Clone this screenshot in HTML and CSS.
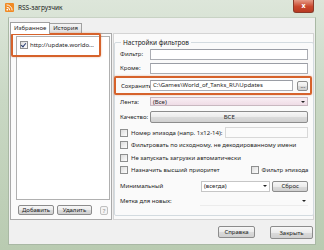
FILE: index.html
```html
<!DOCTYPE html>
<html lang="ru">
<head>
<meta charset="UTF-8">
<title>RSS-загрузчик</title>
<link rel="stylesheet" href="styles.css">
</head>
<body>
<div class="window">
  <div class="titlebar">
    <span class="app-icon">
      <svg width="9" height="9" viewBox="0 0 9 9">
        <rect x="0" y="0" width="9" height="9" rx="1" fill="#f08a24"/>
        <circle cx="2.3" cy="6.7" r="0.9" fill="#fff"/>
        <path d="M1.6 4.2a3.2 3.2 0 0 1 3.2 3.2M1.6 1.9a5.5 5.5 0 0 1 5.5 5.5" stroke="#fff" stroke-width="0.9" fill="none"/>
      </svg>
    </span>
    <span class="title">RSS-загрузчик</span>
    <span class="close">x</span>
  </div>

  <div class="client">
    <div class="body">
      <div class="favorites">
        <div class="tabs">
          <span class="tab active">Избранное</span>
          <span class="tab">История</span>
        </div>
        <div class="tab-page">
          <div class="feed-list">
            <div class="feed"><span class="check checked"></span>http://update.worldo...</div>
          </div>
          <div class="list-buttons">
            <button class="btn add">Добавить</button>
            <button class="btn remove">Удалить</button>
            <button class="btn help">?</button>
          </div>
        </div>
        <div class="mark"></div>
      </div>

      <div class="settings">
        <fieldset class="filters">
          <legend>Настройки фильтров</legend>
          <div class="row">
            <label>Фильтр:</label>
            <span class="input"></span>
          </div>
          <div class="row">
            <label>Кроме:</label>
            <span class="input"></span>
          </div>
          <div class="row save">
            <label>Сохранить</label>
            <span class="input">C:\Games\World_of_Tanks_RU\Updates</span>
            <button class="btn browse">...</button>
          </div>
          <div class="row feed-row">
            <label>Лента:</label>
            <span class="select pink">(Все)</span>
          </div>
          <div class="row quality">
            <label>Качество:</label>
            <button class="btn wide">ВСЕ</button>
          </div>
          <div class="opt episode">
            <span class="check"></span>Номер эпизода (напр. 1x12-14):
            <span class="input ep-input"></span>
          </div>
          <div class="opt"><span class="check"></span>Фильтровать по исходному, не декодированному имени</div>
          <div class="opt"><span class="check"></span>Не запускать загрузки автоматически</div>
          <div class="opt">
            <span class="check"></span>Назначить высший приоритет
            <span class="ep-filter"><span class="check"></span>Фильтр эпизода</span>
          </div>
          <div class="row minimal">
            <label>Минимальный</label>
            <span class="select short">(всегда)</span>
            <button class="btn reset">Сброс</button>
          </div>
          <div class="row label-row">
            <label>Метка для новых:</label>
            <span class="select flat"></span>
          </div>
        </fieldset>
      </div>
    </div>

    <div class="footer">
      <button class="btn help-btn">Справка</button>
      <button class="btn close-btn">Закрыть</button>
    </div>
  </div>
</div>
</body>
</html>
```

FILE: styles.css
```css
html, body {
  margin: 0;
  padding: 0;
}

body {
  font-family: 'Noto Sans', 'DejaVu Sans', sans-serif;
  font-size: 6px;
  color: #1e1e1e;
}

.window {
  width: 324px;
  height: 250px;
  background: linear-gradient(180deg, #dde6da 0%, #c9d8c4 40%, #b9cbb1 100%);
  display: flex;
  flex-direction: column;
}

.titlebar {
  height: 17px;
  display: flex;
  align-items: center;
  padding-left: 5px;
}

.app-icon {
  display: flex;
  margin-top: -2px;
}

.title {
  margin-left: 4px;
  margin-top: -3px;
  font-size: 6.5px;
  color: #222;
}

.close {
  margin-left: auto;
  margin-right: 10px;
  align-self: flex-start;
  width: 19px;
  height: 12px;
  background: linear-gradient(180deg, #e59a86 0%, #c9472d 55%, #b83a22 100%);
  border: 1px solid #8a3a2a;
  border-top: none;
  border-radius: 0 0 3px 3px;
  color: #fff;
  font-size: 7px;
  font-weight: bold;
  text-align: center;
  line-height: 11px;
}

.client {
  flex: 1;
  margin: 0 8px 5px 8px;
  background: #f0f0f0;
  border: 1px solid #a9b8a4;
  border-top-color: #c8d2c4;
  display: flex;
  flex-direction: column;
}

.body {
  display: flex;
  padding: 4px 1px 0 1px;
}

/* left: favourites list */
.favorites {
  position: relative;
  width: 102px;
}

.tabs {
  display: flex;
  height: 11px;
  align-items: flex-end;
}

.tab {
  height: 9px;
  line-height: 9px;
  padding: 0 3px;
  border: 1px solid #a0a0a0;
  border-bottom: none;
  background: linear-gradient(180deg, #f4f4f4, #dedede);
  margin-left: -1px;
}

.tab.active {
  height: 11px;
  line-height: 11px;
  background: #fff;
  margin-left: 0;
  position: relative;
  z-index: 1;
  margin-bottom: -1px;
}

.tab-page {
  height: 187px;
  background: #fbfbfb;
  border: 1px solid #a9a9a9;
  padding: 2px 1px 0 5px;
  box-sizing: border-box;
}

.feed-list {
  height: 164px;
  background: #fff;
  border: 1px solid #b0b0b0;
  padding: 4px 3px;
  box-sizing: border-box;
}

.feed {
  display: flex;
  align-items: center;
  gap: 2px;
  white-space: nowrap;
}

.check {
  display: inline-block;
  width: 6px;
  height: 6px;
  border: 1px solid #8e8f8f;
  background: linear-gradient(135deg, #dcdcdc, #fdfdfd);
  flex-shrink: 0;
  position: relative;
}

.check.checked::after {
  content: '';
  position: absolute;
  left: 1px;
  top: 0;
  width: 2px;
  height: 4px;
  border: solid #2a3f73;
  border-width: 0 1px 1px 0;
  transform: rotate(40deg);
}

.list-buttons {
  display: flex;
  margin-top: 5px;
  padding-left: 2px;
  align-items: center;
}

.btn {
  font-family: inherit;
  font-size: 6px;
  color: #1e1e1e;
  background: linear-gradient(180deg, #f7f7f7 0%, #ebebeb 50%, #dbdbdb 51%, #d0d0d0 100%);
  border: 1px solid #8c8c8c;
  border-radius: 2px;
  padding: 0;
  margin: 0;
  line-height: 8px;
  height: 10px;
}

.btn.add { width: 36px; }
.btn.remove { width: 35px; margin-left: 3px; }
.btn.help {
  width: 8px;
  height: 9px;
  margin-left: 8px;
  background: #f4f4f4;
  border-color: #c0c0c0;
  color: #888;
}

.mark {
  position: absolute;
  left: 1px;
  top: 11px;
  width: 86px;
  height: 20px;
  border: 2px solid #d6622b;
  border-radius: 2px;
  box-shadow: 0 0 2px rgba(214, 98, 43, 0.5);
}

/* right: filter settings */
.settings {
  width: 201px;
  margin-left: 1px;
  margin-top: 11px;
  height: 187px;
  background: #fafafa;
  border: 1px solid #d4d4d4;
  box-sizing: border-box;
}

.filters {
  width: 192px;
  box-sizing: border-box;
  margin: 4px 0 0 0;
  padding: 0 5px 0 5px;
  border: 1px solid #d3dbe0;
  border-radius: 2px;
  height: 178px;
}

.filters legend {
  font-size: 6.5px;
  padding: 0 2px;
  margin-left: 1px;
  line-height: 9px;
}

.row {
  display: flex;
  align-items: center;
  height: 14px;
}

.row label {
  width: 30px;
  flex-shrink: 0;
  white-space: nowrap;
}

.input {
  flex: 1;
  height: 11px;
  background: #fff;
  border: 1px solid #abadb3;
  border-top-color: #9a9da5;
  box-sizing: border-box;
  line-height: 9px;
  padding-left: 2px;
  white-space: nowrap;
  overflow: hidden;
}

.row.save {
  height: 15px;
  margin: 1px -4px 1px -6px;
  border: 2px solid #d6622b;
  border-radius: 2px;
  padding: 0 2px 0 5px;
  box-shadow: 0 0 2px rgba(214, 98, 43, 0.5);
}

.row.save label { width: 29px; }

.btn.browse {
  width: 11px;
  height: 10px;
  margin-left: 4px;
  line-height: 6px;
}

.select {
  flex: 1;
  height: 9px;
  line-height: 8px;
  padding-left: 2px;
  border: 1px solid #b8b8b8;
  box-sizing: border-box;
  position: relative;
  background: #fff;
}

.select::after {
  content: '';
  position: absolute;
  right: 2px;
  top: 3px;
  border: 2px solid transparent;
  border-top: 2px solid #222;
  border-bottom: none;
}

.select.pink {
  background: linear-gradient(180deg, #f8eef3, #efdce6);
  border-color: #c8b8c0;
}

.row.feed-row { height: 11px; }

.row.quality {
  height: 16px;
  margin-top: 2px;
}

.btn.wide {
  flex: 1;
  height: 12px;
}

.opt {
  display: flex;
  align-items: center;
  gap: 3px;
  height: 12.5px;
  white-space: nowrap;
}

.opt.episode {
  margin-top: 1px;
  height: 13px;
}

.opt.episode .input.ep-input {
  flex: 1;
  margin-left: 0;
  background: #fbfbfb;
  border-color: #d8d8d8;
}

.ep-filter {
  display: flex;
  align-items: center;
  gap: 3px;
  margin-left: 28px;
}

.row.minimal {
  height: 13px;
  margin-top: 3px;
}

.row.minimal label { width: 81px; }

.select.short {
  flex: 0 0 69px;
  height: 11px;
  line-height: 9px;
  border-color: #c6c6c6;
}

.btn.reset {
  flex: 1;
  height: 11px;
  margin-left: 2px;
}

.row.label-row {
  height: 13px;
  margin-top: 2px;
}

.row.label-row label { width: 80px; }

.select.flat {
  border: none;
  border-bottom: 1px solid #ececec;
  background: transparent;
}

.footer {
  display: flex;
  justify-content: flex-end;
  padding: 6px 2px 0 0;
  gap: 15px;
}

.btn.help-btn {
  width: 37px;
  height: 12px;
}

.btn.close-btn {
  width: 43px;
  height: 13px;
}
```
